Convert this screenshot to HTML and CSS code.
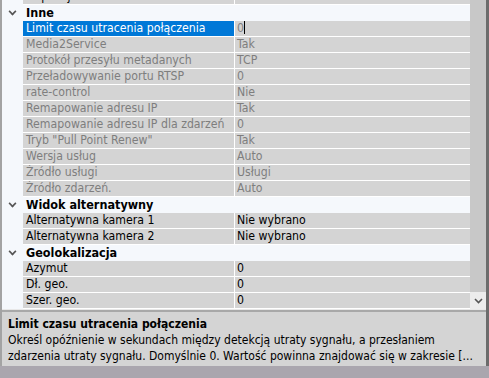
FILE: index.html
```html
<!DOCTYPE html>
<html lang="pl">
<head>
    <meta charset="UTF-8">
    <title>Właściwości kamery</title>
    <link rel="stylesheet" href="styles.css">
</head>
<body>
    <!-- Okno właściwości: siatka + panel opisu -->
    <div class="frame">
        <div class="grid-area">
            <div class="grid">
                <div class="list">
                    <div class="row cut">
                        <span class="indent"></span>
                        <span class="name">Dopasuj do ramki</span>
                        <span class="value">Nie</span>
                    </div>

                    <div class="group"><span class="chev"></span>Inne</div>
                    <div class="row selected">
                        <span class="indent"></span>
                        <span class="name">Limit czasu utracenia połączenia</span>
                        <span class="value">0<i class="caret"></i></span>
                    </div>
                    <div class="row off"><span class="indent"></span><span class="name">Media2Service</span><span class="value">Tak</span></div>
                    <div class="row off"><span class="indent"></span><span class="name">Protokół przesyłu metadanych</span><span class="value">TCP</span></div>
                    <div class="row off"><span class="indent"></span><span class="name">Przeładowywanie portu RTSP</span><span class="value">0</span></div>
                    <div class="row off"><span class="indent"></span><span class="name">rate-control</span><span class="value">Nie</span></div>
                    <div class="row off"><span class="indent"></span><span class="name">Remapowanie adresu IP</span><span class="value">Tak</span></div>
                    <div class="row off"><span class="indent"></span><span class="name">Remapowanie adresu IP dla zdarzeń</span><span class="value">0</span></div>
                    <div class="row off"><span class="indent"></span><span class="name">Tryb "Pull Point Renew"</span><span class="value">Tak</span></div>
                    <div class="row off"><span class="indent"></span><span class="name">Wersja usług</span><span class="value">Auto</span></div>
                    <div class="row off"><span class="indent"></span><span class="name">Źródło usługi</span><span class="value">Usługi</span></div>
                    <div class="row off"><span class="indent"></span><span class="name">Źródło zdarzeń.</span><span class="value">Auto</span></div>

                    <div class="group"><span class="chev"></span>Widok alternatywny</div>
                    <div class="row"><span class="indent"></span><span class="name">Alternatywna kamera 1</span><span class="value">Nie wybrano</span></div>
                    <div class="row"><span class="indent"></span><span class="name">Alternatywna kamera 2</span><span class="value">Nie wybrano</span></div>

                    <div class="group"><span class="chev"></span>Geolokalizacja</div>
                    <div class="row"><span class="indent"></span><span class="name">Azymut</span><span class="value">0</span></div>
                    <div class="row"><span class="indent"></span><span class="name">Dł. geo.</span><span class="value">0</span></div>
                    <div class="row"><span class="indent"></span><span class="name">Szer. geo.</span><span class="value">0</span></div>
                </div>
            </div>

            <!-- Pasek przewijania -->
            <div class="scrollbar">
                <div class="track"></div>
                <div class="arrow">
                    <svg width="9" height="6" viewBox="0 0 9 6"><path d="M1 1 L4.5 4.5 L8 1" fill="none" stroke="#555" stroke-width="1.6"/></svg>
                </div>
            </div>
        </div>

        <!-- Opis zaznaczonej właściwości -->
        <div class="help">
            <div class="help-title">Limit czasu utracenia połączenia</div>
            <div class="help-text">Określ opóźnienie w sekundach między detekcją utraty sygnału, a przesłaniem zdarzenia utraty sygnału. Domyślnie 0. Wartość powinna znajdować się w zakresie [...</div>
        </div>
    </div>
</body>
</html>
```

FILE: styles.css
```css
/* Podstawa */
body {
    margin: 0;
    background: #aaa6ae;
    font-family: "DejaVu Sans Condensed", "DejaVu Sans", sans-serif;
    font-size: 12px;
    color: #000;
}

.frame {
    width: 484px;
    height: 366px;
    border-left: 2px solid #a3a3a3;
    border-right: 3px solid #6c6c6c;
    background: #d4d4d4;
}

/* Siatka właściwości */
.grid-area {
    display: flex;
    height: 309px;
    border-bottom: 1px solid #e8e8e8;
}

.grid {
    flex: 1;
    overflow: hidden;
    background: #f5f8fc;
}

.list {
    margin-top: -11px;
}

.row {
    display: grid;
    grid-template-columns: 21px 212px 236px;
    height: 16px;
    line-height: 15px;
    font-size: 12.2px;
}

.row .name,
.row .value {
    background: #d4d4d4;
    border-bottom: 1px solid #fff;
    border-right: 1px solid #fff;
    padding-left: 3px;
    white-space: nowrap;
    overflow: hidden;
}

.row .value {
    padding-left: 2px;
}

.row.off .name,
.row.off .value {
    color: #7e7e7e;
}

.row.selected .name {
    background: #0078d7;
    color: #fff;
}

.row.selected .value {
    color: #7e7e7e;
}

.caret {
    display: inline-block;
    width: 1px;
    height: 13px;
    background: #000;
    vertical-align: -2px;
}

/* Nagłówki grup */
.group {
    height: 16px;
    line-height: 16px;
    padding-left: 24px;
    font-weight: bold;
    font-size: 12.5px;
    position: relative;
}

.chev {
    position: absolute;
    left: 7px;
    top: 3px;
    width: 5px;
    height: 5px;
    border-right: 2px solid #555;
    border-bottom: 2px solid #555;
    transform: rotate(45deg) scale(0.8);
}

/* Pasek przewijania */
.scrollbar {
    width: 16px;
    display: flex;
    flex-direction: column;
    background: #c8c8c8;
}

.track {
    flex: 1;
}

.arrow {
    height: 17px;
    background: #ececec;
    display: flex;
    align-items: center;
    justify-content: center;
}

/* Panel opisu */
.help {
    height: 51px;
    border-top: 2px solid #a8a8a8;
    border-bottom: 1px solid #8c8c8c;
    padding: 4px 6px 0;
    line-height: 16px;
    overflow: hidden;
}

.help-title {
    font-weight: bold;
    font-size: 12px;
}

.help-text {
    font-size: 12px;
}
```
